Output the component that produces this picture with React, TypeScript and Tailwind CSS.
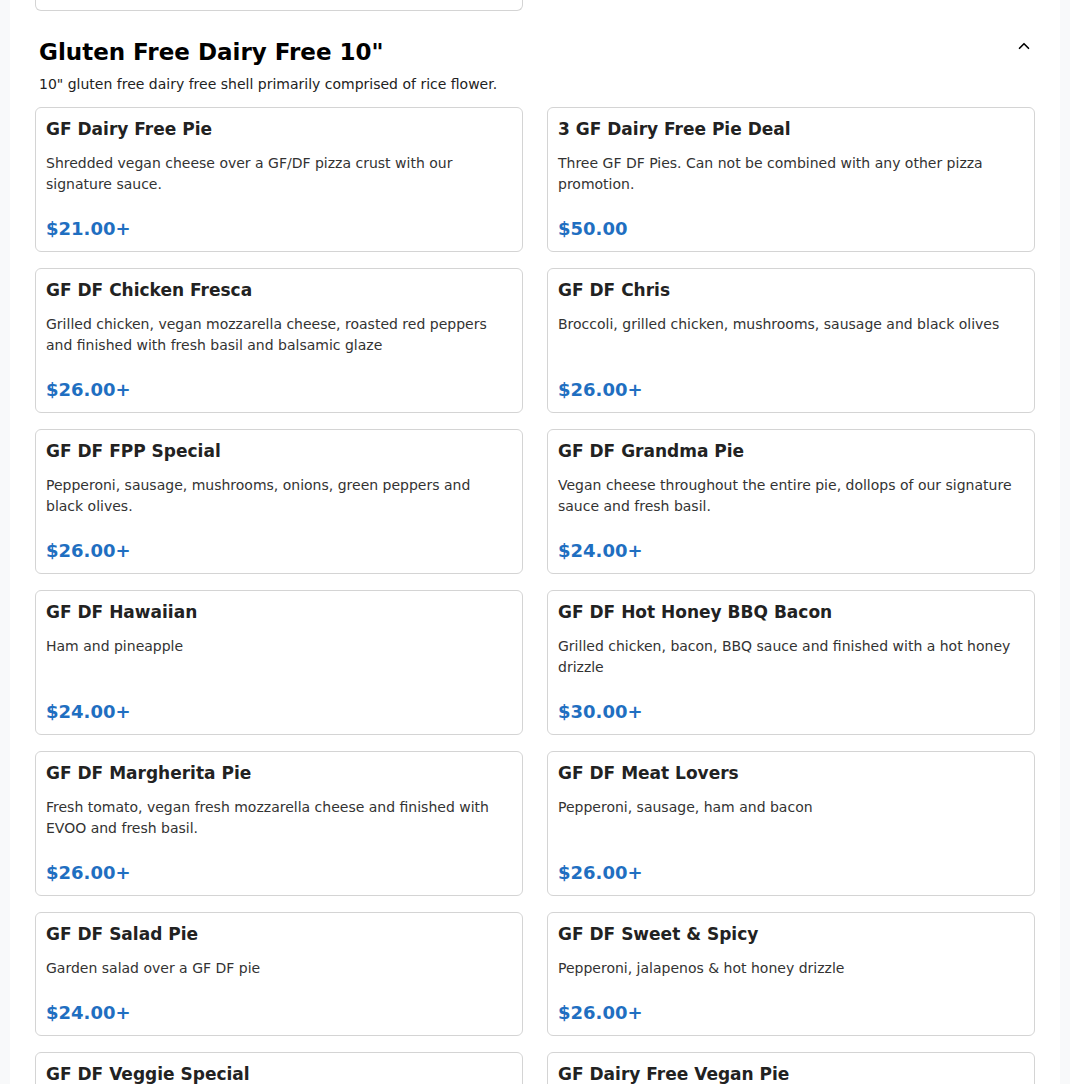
import { ChevronUp } from 'lucide-react'

type Item = { name: string; desc: string; price: string }

const ITEMS: Item[] = [
  { name: 'GF Dairy Free Pie', desc: 'Shredded vegan cheese over a GF/DF pizza crust with our signature sauce.', price: '$21.00+' },
  { name: '3 GF Dairy Free Pie Deal', desc: 'Three GF DF Pies. Can not be combined with any other pizza promotion.', price: '$50.00' },
  { name: 'GF DF Chicken Fresca', desc: 'Grilled chicken, vegan mozzarella cheese, roasted red peppers and finished with fresh basil and balsamic glaze', price: '$26.00+' },
  { name: 'GF DF Chris', desc: 'Broccoli, grilled chicken, mushrooms, sausage and black olives', price: '$26.00+' },
  { name: 'GF DF FPP Special', desc: 'Pepperoni, sausage, mushrooms, onions, green peppers and black olives.', price: '$26.00+' },
  { name: 'GF DF Grandma Pie', desc: 'Vegan cheese throughout the entire pie, dollops of our signature sauce and fresh basil.', price: '$24.00+' },
  { name: 'GF DF Hawaiian', desc: 'Ham and pineapple', price: '$24.00+' },
  { name: 'GF DF Hot Honey BBQ Bacon', desc: 'Grilled chicken, bacon, BBQ sauce and finished with a hot honey drizzle', price: '$30.00+' },
  { name: 'GF DF Margherita Pie', desc: 'Fresh tomato, vegan fresh mozzarella cheese and finished with EVOO and fresh basil.', price: '$26.00+' },
  { name: 'GF DF Meat Lovers', desc: 'Pepperoni, sausage, ham and bacon', price: '$26.00+' },
  { name: 'GF DF Salad Pie', desc: 'Garden salad over a GF DF pie', price: '$24.00+' },
  { name: 'GF DF Sweet & Spicy', desc: 'Pepperoni, jalapenos & hot honey drizzle', price: '$26.00+' },
  { name: 'GF DF Veggie Special', desc: 'Broccoli, mushrooms, onions, green peppers, black olives and tomato.', price: '$26.00+' },
  { name: 'GF Dairy Free Vegan Pie', desc: 'Vegan cheese, roasted vegetables and our signature sauce.', price: '$24.00+' },
]

function ItemCard({ item }: { item: Item }) {
  return (
    <div className="flex flex-col border border-[#d4d4d4] rounded-md bg-white px-[10px] pt-[11px] pb-[11px]">
      <h3 className="text-[17px] leading-[21px] font-bold text-[#222]">{item.name}</h3>
      <p className="mt-[13px] pr-[6px] text-[14px] leading-[21px] text-[#333]">{item.desc}</p>
      <div className="mt-auto pt-[23px] text-[18px] leading-[22px] font-bold text-[#1f6fc1]">{item.price}</div>
    </div>
  )
}

export default function App() {
  return (
    <div className="min-h-screen bg-[#f8f9fa]" style={{ fontFamily: '"DejaVu Sans", sans-serif' }}>
      <div className="max-w-[1050px] mx-auto bg-white px-[25px] pb-10">
        <div className="grid grid-cols-2 gap-x-[24px]">
          <div className="h-[11px] border border-t-0 border-[#d4d4d4] rounded-b-md" />
        </div>

        <section className="mt-[25px]">
          <div className="flex items-start justify-between px-[4px]">
            <h2 className="text-[23px] leading-[32px] font-bold text-black">Gluten Free Dairy Free 10"</h2>
            <ChevronUp size={18} strokeWidth={2.2} className="mt-[1px] -mr-[2px] text-black" />
          </div>
          <p className="px-[4px] mt-[6px] text-[14px] leading-[21px] text-[#222]">
            10" gluten free dairy free shell primarily comprised of rice flower.
          </p>

          <div className="mt-[12px] grid grid-cols-2 gap-x-[24px] gap-y-[16px]">
            {ITEMS.map(item => (
              <ItemCard key={item.name} item={item} />
            ))}
          </div>
        </section>
      </div>
    </div>
  )
}
